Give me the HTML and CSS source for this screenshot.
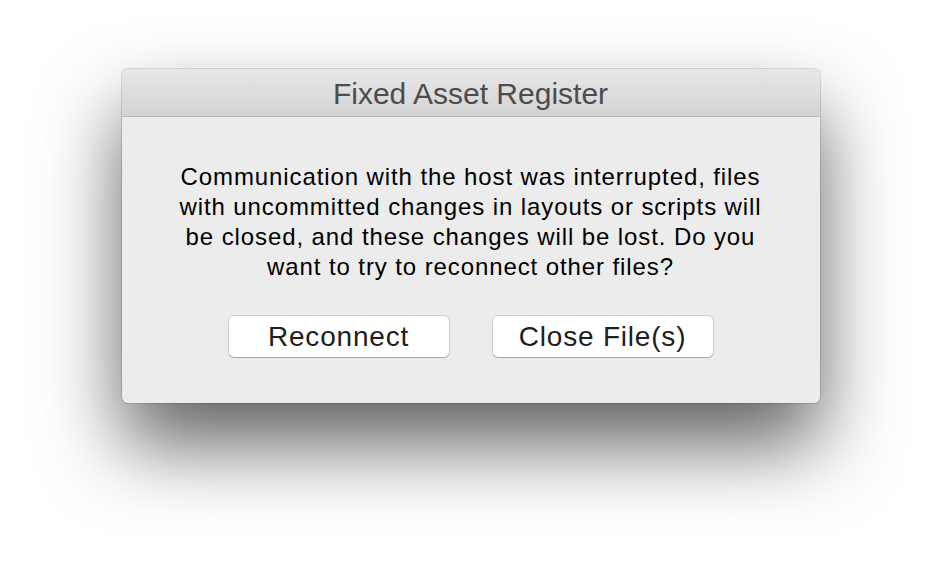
FILE: index.html
```html
<!DOCTYPE html>
<html>
<head>
<meta charset="utf-8">
<link rel="stylesheet" href="styles.css">
</head>
<body>
<div class="stage">
  <div class="dialog">
    <div class="titlebar">Fixed Asset Register</div>
    <div class="content">
      <p class="message">Communication with the host was interrupted, files<br>with uncommitted changes in layouts or scripts will<br>be closed, and these changes will be lost. Do you<br>want to try to reconnect other files?</p>
      <div class="buttons">
        <button class="btn">Reconnect</button>
        <button class="btn">Close File(s)</button>
      </div>
    </div>
  </div>
</div>
</body>
</html>
```
FILE: styles.css
```css
html, body {
  margin: 0;
  padding: 0;
  background: #ffffff;
  width: 941px;
  height: 577px;
  overflow: hidden;
}
.stage {
  display: flex;
  justify-content: center;
  padding-top: 69px;
}
.dialog {
  width: 698px;
  height: 334px;
  box-sizing: border-box;
  background: #ececec;
  border-radius: 6px;
  box-shadow: 0 0 0 1px rgba(0,0,0,0.12), 0 42px 80px rgba(0,0,0,0.62);
  font-family: "Liberation Sans", Arial, sans-serif;
  overflow: hidden;
  display: flex;
  flex-direction: column;
}
.titlebar {
  height: 48px;
  flex: none;
  background: linear-gradient(#e8e7e8, #d4d3d4);
  border-bottom: 1px solid #b9b9b9;
  color: #4c4c4c;
  font-size: 30px;
  display: flex;
  align-items: center;
  justify-content: center;
  padding-top: 3px;
  box-sizing: border-box;
}
.content {
  flex: 1;
  display: flex;
  flex-direction: column;
  align-items: center;
  padding-top: 45px;
}
.message {
  margin: 0;
  font-size: 24px;
  letter-spacing: 0.9px;
  line-height: 30px;
  text-align: center;
  color: #000;
}
.buttons {
  display: flex;
  gap: 44px;
  margin-top: 34px;
}
.btn {
  width: 220px;
  height: 41px;
  background: #ffffff;
  border: none;
  border-radius: 5px;
  box-shadow: 0 0 0 1px rgba(0,0,0,0.12), 0 1px 1px rgba(0,0,0,0.2);
  font-family: "Liberation Sans", Arial, sans-serif;
  font-size: 28px;
  letter-spacing: 0.8px;
  color: #1e1e1e;
  padding: 0;
}
```
